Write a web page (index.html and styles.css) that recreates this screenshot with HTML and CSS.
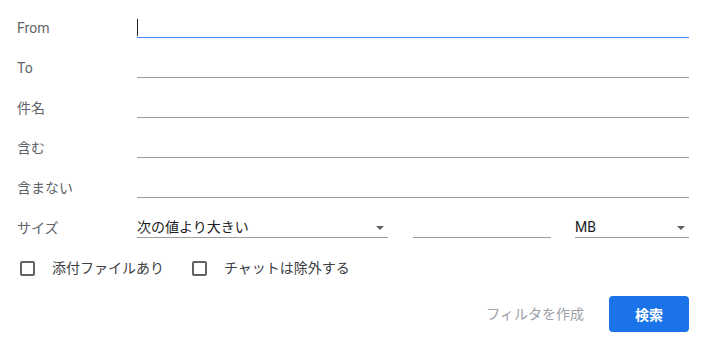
FILE: index.html
```html
<!DOCTYPE html>
<html lang="ja">
<head>
<meta charset="utf-8">
<link rel="stylesheet" href="styles.css">
</head>
<body>
<div class="form">
  <div class="row">
    <div class="label">From</div>
    <div class="field focused"><span class="caret"></span></div>
  </div>
  <div class="row">
    <div class="label">To</div>
    <div class="field"></div>
  </div>
  <div class="row">
    <div class="label">件名</div>
    <div class="field"></div>
  </div>
  <div class="row">
    <div class="label">含む</div>
    <div class="field"></div>
  </div>
  <div class="row">
    <div class="label">含まない</div>
    <div class="field"></div>
  </div>
  <div class="row">
    <div class="label">サイズ</div>
    <div class="size-fields">
      <div class="field select sel-op"><span class="value">次の値より大きい</span><span class="arrow"></span></div>
      <div class="field num"></div>
      <div class="field select sel-unit"><span class="value">MB</span><span class="arrow"></span></div>
    </div>
  </div>
  <div class="checks">
    <label class="check"><span class="box"></span><span class="check-text">添付ファイルあり</span></label>
    <label class="check check-2"><span class="box"></span><span class="check-text">チャットは除外する</span></label>
  </div>
  <div class="actions">
    <span class="btn-text">フィルタを作成</span>
    <span class="btn-primary">検索</span>
  </div>
</div>
</body>
</html>
```

FILE: styles.css
```css
html, body {
  margin: 0;
  padding: 0;
  background: #fff;
}
body {
  font-family: Roboto, "Noto Sans CJK JP", sans-serif;
  font-size: 14px;
  color: #202124;
}
.form {
  padding: 0 13px 0 17px;
}
.row {
  display: grid;
  grid-template-columns: 120px 1fr;
  height: 40px;
}
.label {
  color: #5f6368;
  line-height: 20px;
  align-self: start;
  margin-top: 18px;
}
.field {
  height: 37px;
  border-bottom: 1px solid #9e9e9e;
  box-sizing: content-box;
  display: flex;
  align-items: flex-end;
}
.field.focused {
  border-bottom: 1px solid #4285f4;
}
.caret {
  width: 1px;
  height: 17px;
  background: #202124;
  margin-bottom: 1px;
}
.size-fields {
  display: flex;
  gap: 24px;
}
.sel-op { width: 251px; margin-right: 1px; }
.num { width: 138px; }
.sel-unit { flex: 1; }
.select {
  justify-content: space-between;
  align-items: flex-end;
}
.value {
  line-height: 20px;
}
.arrow {
  width: 0;
  height: 0;
  border-left: 4px solid transparent;
  border-right: 4px solid transparent;
  border-top: 4px solid #5f6368;
  margin: 0 4px 7px 0;
}
.checks {
  display: flex;
  align-items: center;
  height: 40px;
  margin-top: 8px;
}
.check {
  display: flex;
  align-items: center;
}
.box {
  width: 11px;
  height: 11px;
  border: 2px solid #5f6368;
  border-radius: 2px;
  margin: 0 17px 0 3px;
}
.check-2 { margin-left: 25px; }
.check-text {
  color: #3c4043;
  line-height: 20px;
}
.actions {
  display: flex;
  justify-content: flex-end;
  align-items: center;
  gap: 25px;
  margin-top: 8px;
}
.btn-text {
  color: #9aa0a6;
  line-height: 20px;
}
.btn-primary {
  width: 80px;
  height: 36px;
  background: #1a73e8;
  color: #fff;
  font-weight: 700;
  border-radius: 4px;
  display: flex;
  align-items: center;
  justify-content: center;
}
```
